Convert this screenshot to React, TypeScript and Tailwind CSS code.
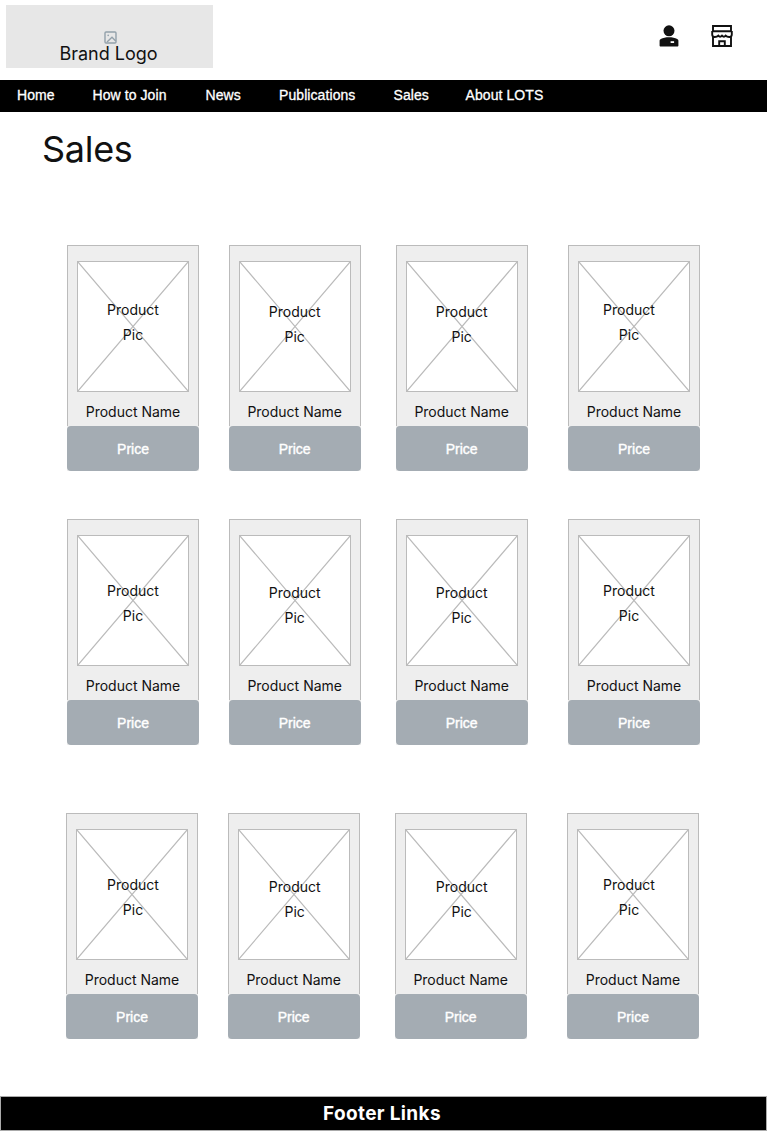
import React from "react";

const navItems = [
  { label: "Home", width: "w-[75.5px]" },
  { label: "How to Join", width: "w-[113px]" },
  { label: "News", width: "w-[73.5px]" },
  { label: "Publications", width: "w-[114.5px]" },
  { label: "Sales", width: "w-[72px]" },
  { label: "About LOTS", width: "w-[90px]" },
];

const labelShift = [
  "",
  "translate-y-[2px]",
  "translate-y-[2px]",
  "-translate-x-[5px]",
];

const rows = [
  { id: "first", wrap: "mt-[71px] ml-[67px]", pad: "pt-[35px]" },
  { id: "second", wrap: "mt-[48px] ml-[67px]", pad: "pt-[42px]" },
  { id: "third", wrap: "mt-[68px] ml-[66px]", pad: "pt-[42px] pl-[2px]" },
];

function ImageIcon() {
  return (
    <svg width="13" height="13" viewBox="0 0 13 13" fill="none" stroke="#93a1ab" strokeWidth="1.4">
      <rect x="1" y="1" width="11" height="11" rx="1" />
      <circle cx="4.2" cy="4.4" r="0.8" fill="#93a1ab" stroke="none" />
      <path d="M3 11 8 6.3l3.7 3.6" />
    </svg>
  );
}

function UserIcon() {
  return (
    <svg width="20" height="22" viewBox="0 0 20 22" fill="#111">
      <circle cx="10" cy="5.8" r="5.5" />
      <path d="M.6 20.4V15.600c0-.8.4-1.400 1.200-1.700C4 12.900 6.700 12.300 10 12.300s6 .6 8.200 1.600c.8.300 1.200.9 1.200 1.700v4.800c0 .7-.4 1.200-1.200 1.200H1.800c-.8 0-1.200-.5-1.200-1.200Z" />
      <path d="M11.600 16.200h3.500v1.800h-3.500Z" fill="#fff" />
    </svg>
  );
}

function StoreIcon() {
  return (
    <svg width="22" height="22" viewBox="0 0 22 22" fill="none" stroke="#111" strokeWidth="1.9">
      <path d="M2 6V1h18v5M1.200 6.200h19.600M1.200 6v3.500c0 1.500 1 2.500 2.600 2.500 1.800 0 2.900-.6 3.500-1.300 1 1.300 2.600 1.300 3.700 0 1.100 1.300 2.700 1.300 3.700 0 .6.700 1.700 1.300 3.500 1.300 1.600 0 2.600-1 2.600-2.500V6M2 11.500V21h18v-9.500" />
      <path d="M8.200 21v-4.800h5.600V21" />
    </svg>
  );
}

function ProductCard({ pad, shift }: { pad: string; shift: string }) {
  return (
    <article className="flex h-[226px] w-[132px] flex-col bg-[#eee]">
      <div className="flex h-[181px] flex-col items-center border border-b-0 border-[#bbb] pt-[15px]">
        <div className="relative h-[131px] w-[112px] border border-[#bbb] bg-white">
          <svg
            className="absolute inset-0 h-full w-full"
            viewBox="0 0 110 129"
            preserveAspectRatio="none"
            stroke="#bbb"
            strokeWidth="1.2"
            fill="none"
          >
            <path d="M0 0 110 129M110 0 0 129" />
          </svg>
          <div className={`relative text-center font-[Inter,sans-serif] text-[14px] leading-[25px] ${pad} ${shift}`}>
            Product
            <br />
            Pic
          </div>
        </div>
        <div className="mt-[10px] font-[Inter,sans-serif] text-[14px] leading-[20px] whitespace-nowrap">
          Product Name
        </div>
      </div>
      <div className="flex h-[45px] items-center justify-center rounded-[4px] bg-[#a4acb3] pt-[2px] text-[14px] text-white [-webkit-text-stroke:0.4px_white]">
        Price
      </div>
    </article>
  );
}

export default function App() {
  return (
    <div className="flex h-[1131px] w-[767px] flex-col overflow-hidden bg-white font-['Liberation_Sans',Arial,sans-serif] text-[#111]">
      <header className="flex h-[80px] items-start justify-between pt-[5px] pr-[34px] pl-[6px]">
        <div className="flex h-[63px] w-[207px] flex-col items-center bg-[#e7e7e7] pt-[26px]">
          <span className="ml-[2px]">
            <ImageIcon />
          </span>
          <span className="mr-[2px] font-[Inter,sans-serif] text-[18px] leading-[20px]">Brand Logo</span>
        </div>
        <div className="flex gap-[32px] pt-[20px]">
          <UserIcon />
          <StoreIcon />
        </div>
      </header>
      <nav className="flex h-[32px] bg-black pl-[17px] text-[14px] leading-[31px] tracking-[0.08px] text-white [-webkit-text-stroke:0.3px_white]">
        {navItems.map((item) => (
          <a key={item.label} className={`shrink-0 whitespace-nowrap ${item.width}`}>
            {item.label}
          </a>
        ))}
      </nav>
      <h1 className="mt-[16px] ml-[42px] h-[46px] font-[Inter,sans-serif] text-[36px] leading-[42px] tracking-[-0.3px]">
        Sales
      </h1>
      <main>
        {rows.map((row) => (
          <section key={row.id} className={`grid grid-cols-[161.700px_167px_172.300px_132px] ${row.wrap}`}>
            {labelShift.map((shift, i) => (
              <ProductCard key={i} pad={row.pad} shift={shift} />
            ))}
          </section>
        ))}
      </main>
      <footer className="mt-auto flex h-[35px] items-center justify-center border border-[#aaa] bg-black pt-[1px] pr-[3px] font-[Inter,sans-serif] text-[19px] font-bold tracking-[0.35px] text-white">
        Footer Links
      </footer>
    </div>
  );
}
